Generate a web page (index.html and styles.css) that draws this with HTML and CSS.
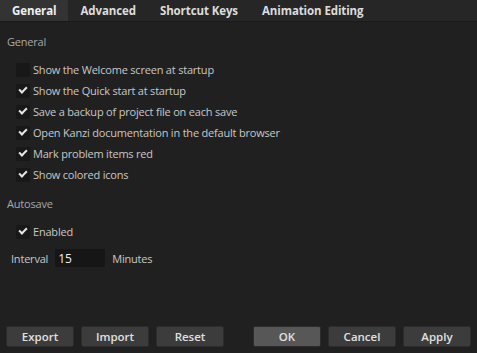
FILE: index.html
```html
<!DOCTYPE html>
<html lang="en">
<head>
    <meta charset="UTF-8">
    <title>Preferences</title>
    <link rel="stylesheet" href="styles.css">
</head>
<body>
    <div class="dialog">
        <div class="tabs">
            <div class="tab active">General</div>
            <div class="tab">Advanced</div>
            <div class="tab">Shortcut Keys</div>
            <div class="tab">Animation Editing</div>
        </div>

        <div class="content">
            <div class="section-title">General</div>
            <div class="options">
                <label class="option"><span class="box"></span>Show the Welcome screen at startup</label>
                <label class="option"><span class="box checked"></span>Show the Quick start at startup</label>
                <label class="option"><span class="box checked"></span>Save a backup of project file on each save</label>
                <label class="option"><span class="box checked"></span>Open Kanzi documentation in the default browser</label>
                <label class="option"><span class="box checked"></span>Mark problem items red</label>
                <label class="option"><span class="box checked"></span>Show colored icons</label>
            </div>

            <div class="section-title autosave">Autosave</div>
            <div class="options">
                <label class="option"><span class="box checked"></span>Enabled</label>
            </div>
            <div class="interval">
                <span>Interval</span>
                <input class="interval-input" type="text" value="15">
                <span>Minutes</span>
            </div>
        </div>

        <div class="footer">
            <div class="btn-group">
                <button class="btn">Export</button>
                <button class="btn">Import</button>
                <button class="btn">Reset</button>
            </div>
            <div class="btn-group">
                <button class="btn primary">OK</button>
                <button class="btn">Cancel</button>
                <button class="btn">Apply</button>
            </div>
        </div>
    </div>
</body>
</html>
```

FILE: styles.css
```css
* {
    margin: 0;
    padding: 0;
    box-sizing: border-box;
}

:root {
    --bg: #202020;
    --tabbar: #262626;
    --tab-active: #333333;
    --text: #c8c8c8;
    --text-dim: #a8a8a8;
    --box: #181818;
    --button: #3c3c3c;
    --button-primary: #575757;
}

body {
    font-family: 'Open Sans', 'Noto Sans', sans-serif;
    font-size: 11px;
    letter-spacing: -0.2px;
    color: var(--text);
    background: var(--bg);
    width: 477px;
    height: 353px;
    overflow: hidden;
}

.dialog {
    height: 353px;
    display: flex;
    flex-direction: column;
}

.tabs {
    display: flex;
    height: 22px;
    background: var(--tabbar);
    border-bottom: 1px solid #1a1a1a;
}

.tab {
    padding: 0 12px;
    line-height: 21px;
    font-size: 11.5px;
    font-weight: 700;
    letter-spacing: -0.1px;
    color: #dcdcdc;
}

.tab.active {
    background: var(--tab-active);
    color: #f0f0f0;
}

.content {
    flex: 1;
    padding: 12px 7px 0;
}

.section-title {
    color: var(--text-dim);
    line-height: 16px;
}

.section-title.autosave {
    margin-top: 11px;
}

.options {
    padding: 9px 0 0 9px;
}

.option {
    display: flex;
    align-items: center;
    gap: 3px;
    height: 21px;
}

.box {
    width: 14px;
    height: 14px;
    background: var(--box);
    display: flex;
    align-items: center;
    justify-content: center;
}

.box.checked::after {
    content: '';
    width: 6px;
    height: 3px;
    border-left: 2px solid #e6e6e6;
    border-bottom: 2px solid #e6e6e6;
    transform: rotate(-45deg) translate(1px, -1px);
}

.interval {
    display: flex;
    align-items: center;
    gap: 7px;
    padding: 7px 0 0 4px;
}

.interval-input {
    width: 50px;
    height: 18px;
    background: #161616;
    border: none;
    color: #f0f0f0;
    font-family: inherit;
    font-size: 12px;
    padding-left: 3px;
    outline: none;
}

.footer {
    display: flex;
    justify-content: space-between;
    padding: 0 6px 6px;
}

.btn-group {
    display: flex;
    gap: 7px;
}

.btn {
    width: 68px;
    height: 21px;
    background: var(--button);
    border: 1px solid #2c2c2c;
    border-radius: 2px;
    color: #e0e0e0;
    font-family: inherit;
    font-size: 11.5px;
    font-weight: 600;
}

.btn.primary {
    background: var(--button-primary);
}
```
